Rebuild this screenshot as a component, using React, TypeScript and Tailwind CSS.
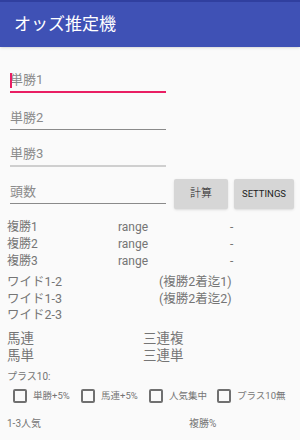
import React from "react";

const font = { fontFamily: '"Roboto", "Noto Sans CJK JP", sans-serif' };

function Field({ label, active, light }: { label: string; active?: boolean; light?: boolean }) {
  return (
    <div className="relative w-[156px] h-[37px] flex items-end">
      <div
        className={`w-full pb-[5px] text-[13px] leading-none text-[#8a8a8a] ${
          active ? "border-b-2 border-[#e91e63]" : light ? "border-b-2 border-[#cfcfcf]" : "border-b border-[#8a8a8a]"
        }`}
      >
        {active && <span className="absolute left-0 bottom-[5px] h-[15px] w-[1.5px] bg-[#e91e63]" />}
        {label}
      </div>
    </div>
  );
}

function Check({ label }: { label: string }) {
  return (
    <div className="flex items-center w-[68px] gap-[6px] pl-[6px]">
      <div className="w-[14px] h-[14px] border-2 border-[#707070] rounded-[2px] shrink-0" />
      <span className="text-[9.5px] text-[#757575] whitespace-nowrap">{label}</span>
    </div>
  );
}

export default function App() {
  return (
    <div className="w-[300px] h-[440px] bg-[#fafafa] overflow-hidden" style={font}>
      <div className="h-[47px] bg-[#3f51b5] border-t-2 border-[#303f9f] flex items-center pl-[14px] shadow-sm">
        <span className="text-white text-[17px]">オッズ推定機</span>
      </div>

      <div className="pl-[10px] flex flex-col">
        <div className="mt-[9px]"><Field label="単勝1" active /></div>
        <Field label="単勝2" />
        <Field label="単勝3" light />
        <div className="flex items-end">
          <Field label="頭数" />
          <button className="ml-[8px] mb-[-5px] w-[54px] h-[30px] bg-[#d6d6d6] rounded-[2px] text-[11px] font-light text-[#222] shadow-sm">計算</button>
          <button className="ml-[6px] mb-[-5px] w-[60px] h-[30px] bg-[#d6d6d6] rounded-[2px] text-[9.5px] text-[#222] shadow-sm">SETTINGS</button>
        </div>
      </div>

      <div className="mt-[15px] pl-[7px] text-[12px] leading-[17px] text-[#757575]">
        {["複勝1", "複勝2", "複勝3"].map((t) => (
          <div key={t} className="grid grid-cols-[111px_112px_1fr]">
            <span>{t}</span>
            <span>range</span>
            <span>-</span>
          </div>
        ))}
      </div>

      <div className="mt-[4px] pl-[7px] text-[12.5px] leading-[16.5px] text-[#757575]">
        <div className="grid grid-cols-[152px_1fr]"><span>ワイド1-2</span><span>(複勝2着迄1)</span></div>
        <div className="grid grid-cols-[152px_1fr]"><span>ワイド1-3</span><span>(複勝2着迄2)</span></div>
        <div><span>ワイド2-3</span></div>
      </div>

      <div className="mt-[6px] pl-[7px] text-[13.5px] leading-[17px] text-[#757575]">
        <div className="grid grid-cols-[136px_1fr]"><span>馬連</span><span>三連複</span></div>
        <div className="grid grid-cols-[136px_1fr]"><span>馬単</span><span>三連単</span></div>
      </div>

      <div className="mt-[5px] pl-[7px] text-[10px] text-[#757575]">プラス10:</div>

      <div className="mt-[5px] pl-[7px] flex">
        <Check label="単勝+5%" />
        <Check label="馬連+5%" />
        <Check label="人気集中" />
        <Check label="プラス10無" />
      </div>

      <div className="mt-[13px] pl-[7px] grid grid-cols-[182px_1fr] text-[10px] text-[#757575]">
        <span>1-3人気</span>
        <span>複勝%</span>
      </div>
    </div>
  );
}
